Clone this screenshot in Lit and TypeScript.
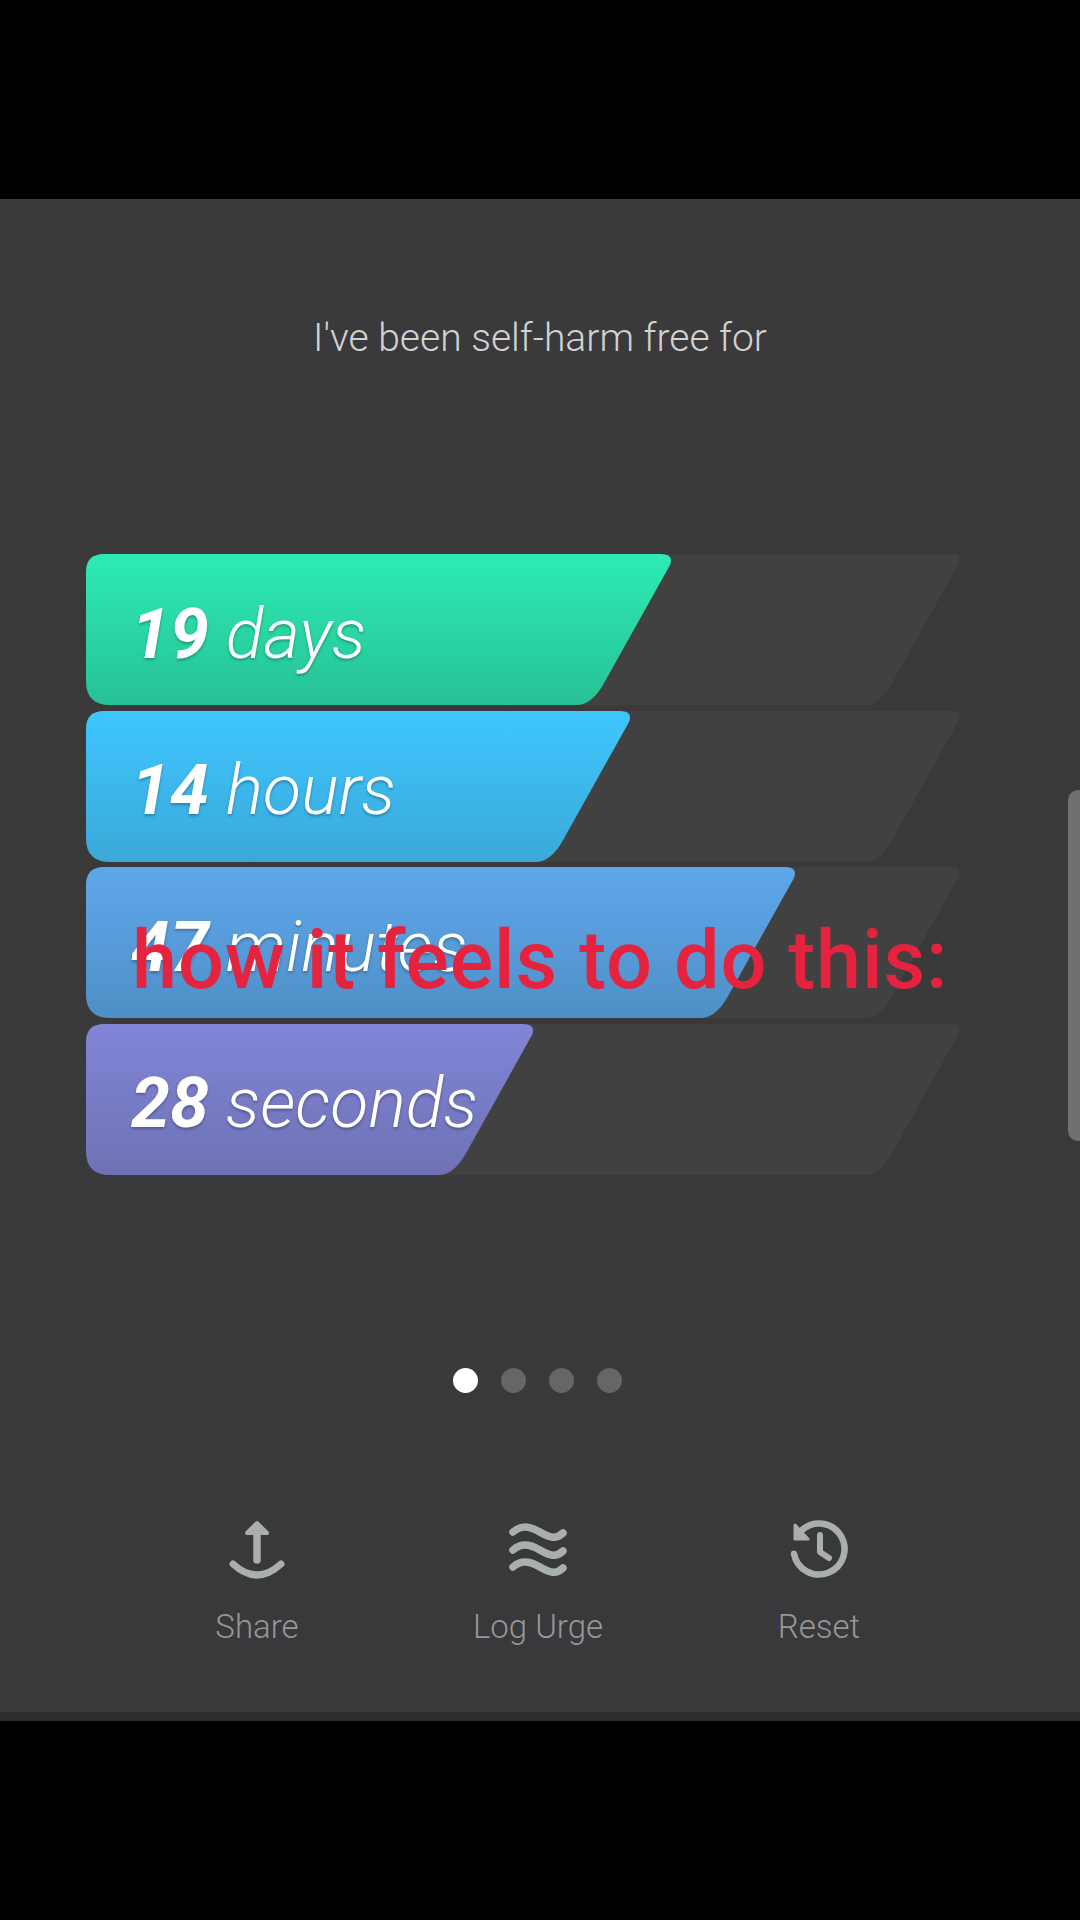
import { LitElement, html, css, svg } from "lit";
import { customElement } from "lit/decorators.js";

const H = 151;
function barPath(w: number, tr: number) {
  return `M18 0 H${w - tr} Q${w + 3} 0 ${w - 1} 11 L${w - 68} 131 Q${w - 80} ${H} ${w - 94} ${H} H24 Q0 ${H} 0 127 V18 Q0 0 18 0 Z`;
}

const rows = [
  { id: "g1", w: 585, from: "#2eebb4", to: "#27c196", n: "19", u: "days" },
  { id: "g2", w: 544, from: "#3fc6ff", to: "#3aa9d8", n: "14", u: "hours" },
  { id: "g3", w: 709, from: "#5fa7ec", to: "#4f8fc6", n: "47", u: "minutes" },
  { id: "g4", w: 447, from: "#8285d8", to: "#6e72b3", n: "28", u: "seconds" },
];

@customElement("app-root")
export class AppRoot extends LitElement {
  static styles = css`
    :host {
      display: block;
      position: relative;
      width: 1080px;
      height: 1920px;
      background: #000;
      overflow: hidden;
      font-family: Roboto, "Noto Sans", sans-serif;
    }
    .panel {
      margin-top: 199px;
      height: 1513px;
      box-sizing: border-box;
      padding-top: 117px;
      background: linear-gradient(#3b3a3b, #39383a);
      display: flex;
      flex-direction: column;
      align-items: center;
    }
    .band { height: 9px; background: #2e2e2e; }
    .title {
      font-size: 39px;
      line-height: 44px;
      font-weight: 300;
      color: #d2d2d2;
      margin: 0 0 194px;
    }
    .bars {
      align-self: flex-start;
      margin-left: 86px;
      display: flex;
      flex-direction: column;
      gap: 5.67px;
    }
    .bar {
      position: relative;
      width: 890px;
      height: 151px;
      display: flex;
      align-items: center;
    }
    .bar svg {
      position: absolute;
      inset: 0;
      overflow: visible;
    }
    .txt {
      position: relative;
      margin: 8px 0 0 45px;
      font-size: 70px;
      line-height: 80px;
      font-style: italic;
      font-weight: 300;
      color: #fff;
      white-space: nowrap;
      text-shadow: 0 2px 3px rgba(0, 0, 0, 0.28);
    }
    .txt b { font-weight: 700; }
    .dots {
      margin: 193px 5px 0 0;
      display: flex;
      gap: 23.33px;
    }
    .dot { width: 25px; height: 25px; border-radius: 50%; background: #666667; }
    .dot.on { background: #fff; }
    .actions {
      margin-top: 127px;
      align-self: flex-start;
      margin-left: 116.5px;
      display: grid;
      grid-template-columns: repeat(3, 281px);
    }
    .action {
      display: flex;
      flex-direction: column;
      align-items: center;
      gap: 29px;
    }
    .action svg { display: block; width: 58px; height: 58px; color: #a9aeae; overflow: visible; }
    .action span {
      font-size: 33px;
      line-height: 40px;
      font-weight: 300;
      color: #969797;
    }
    .caption {
      position: absolute;
      left: 132px;
      top: 920px;
      margin: 0;
      font-size: 81px;
      line-height: 81px;
      letter-spacing: 0.87px;
      font-weight: 500;
      color: #e5233f;
      white-space: nowrap;
    }
    .scroll {
      position: absolute;
      right: 0;
      top: 790px;
      width: 12px;
      height: 351px;
      background: #706f71;
      border-radius: 10px 0 0 10px;
    }
  `;

  render() {
    return html`
      <div class="panel">
        <p class="title">I've been self-harm free for</p>
        <div class="bars">
          ${rows.map(
            (r) => html`
              <div class="bar">
                <svg width="890" height="151" viewBox="0 0 890 151">
                  ${svg`
                    <defs>
                      <linearGradient id=${r.id} x1="0" y1="0" x2="0" y2="1">
                        <stop offset="0" stop-color=${r.from}></stop>
                        <stop offset="1" stop-color=${r.to}></stop>
                      </linearGradient>
                    </defs>
                    <path d=${barPath(873, 6)} fill="#414141"></path>
                    <path d=${barPath(r.w, 10)} fill=${`url(#${r.id})`}></path>
                  `}
                </svg>
                <div class="txt"><b>${r.n}</b> ${r.u}</div>
              </div>
            `
          )}
        </div>
        <div class="dots">
          <div class="dot on"></div>
          <div class="dot"></div>
          <div class="dot"></div>
          <div class="dot"></div>
        </div>
        <div class="actions">
          <div class="action">
            <svg viewBox="0 0 58 58" fill="none" stroke="currentColor" stroke-linecap="round" stroke-linejoin="round">
              <path d="M29 12V40" stroke-width="7.5"></path>
              <path d="M29 3L39 13H19Z" fill="currentColor" stroke-width="4"></path>
              <path d="M5 44Q29 66 53 44" stroke-width="7"></path>
            </svg>
            <span>Share</span>
          </div>
          <div class="action">
            <svg viewBox="0 0 58 58" fill="none" stroke="currentColor" stroke-linecap="round" stroke-width="7.5">
              <path d="M4 12C12 5 20 6 29 11S46 21 54 13"></path>
              <path d="M4 30C12 23 20 24 29 29S46 39 54 31"></path>
              <path d="M4 47C12 40 20 41 29 46S46 56 54 48"></path>
            </svg>
            <span>Log Urge</span>
          </div>
          <div class="action">
            <svg viewBox="0 0 58 58" fill="none" stroke="currentColor" stroke-linecap="round" stroke-linejoin="round">
              <path d="M12 10A25.5 25.5 0 1 1 4 33.8" stroke-width="6.5"></path>
              <path d="M5 5V19H18Z" fill="currentColor" stroke-width="3"></path>
              <path d="M30 15V32L39 38" stroke-width="6"></path>
            </svg>
            <span>Reset</span>
          </div>
        </div>
      </div>
      <div class="band"></div>
      <p class="caption">how it feels to do this:</p>
      <div class="scroll"></div>
    `;
  }
}
